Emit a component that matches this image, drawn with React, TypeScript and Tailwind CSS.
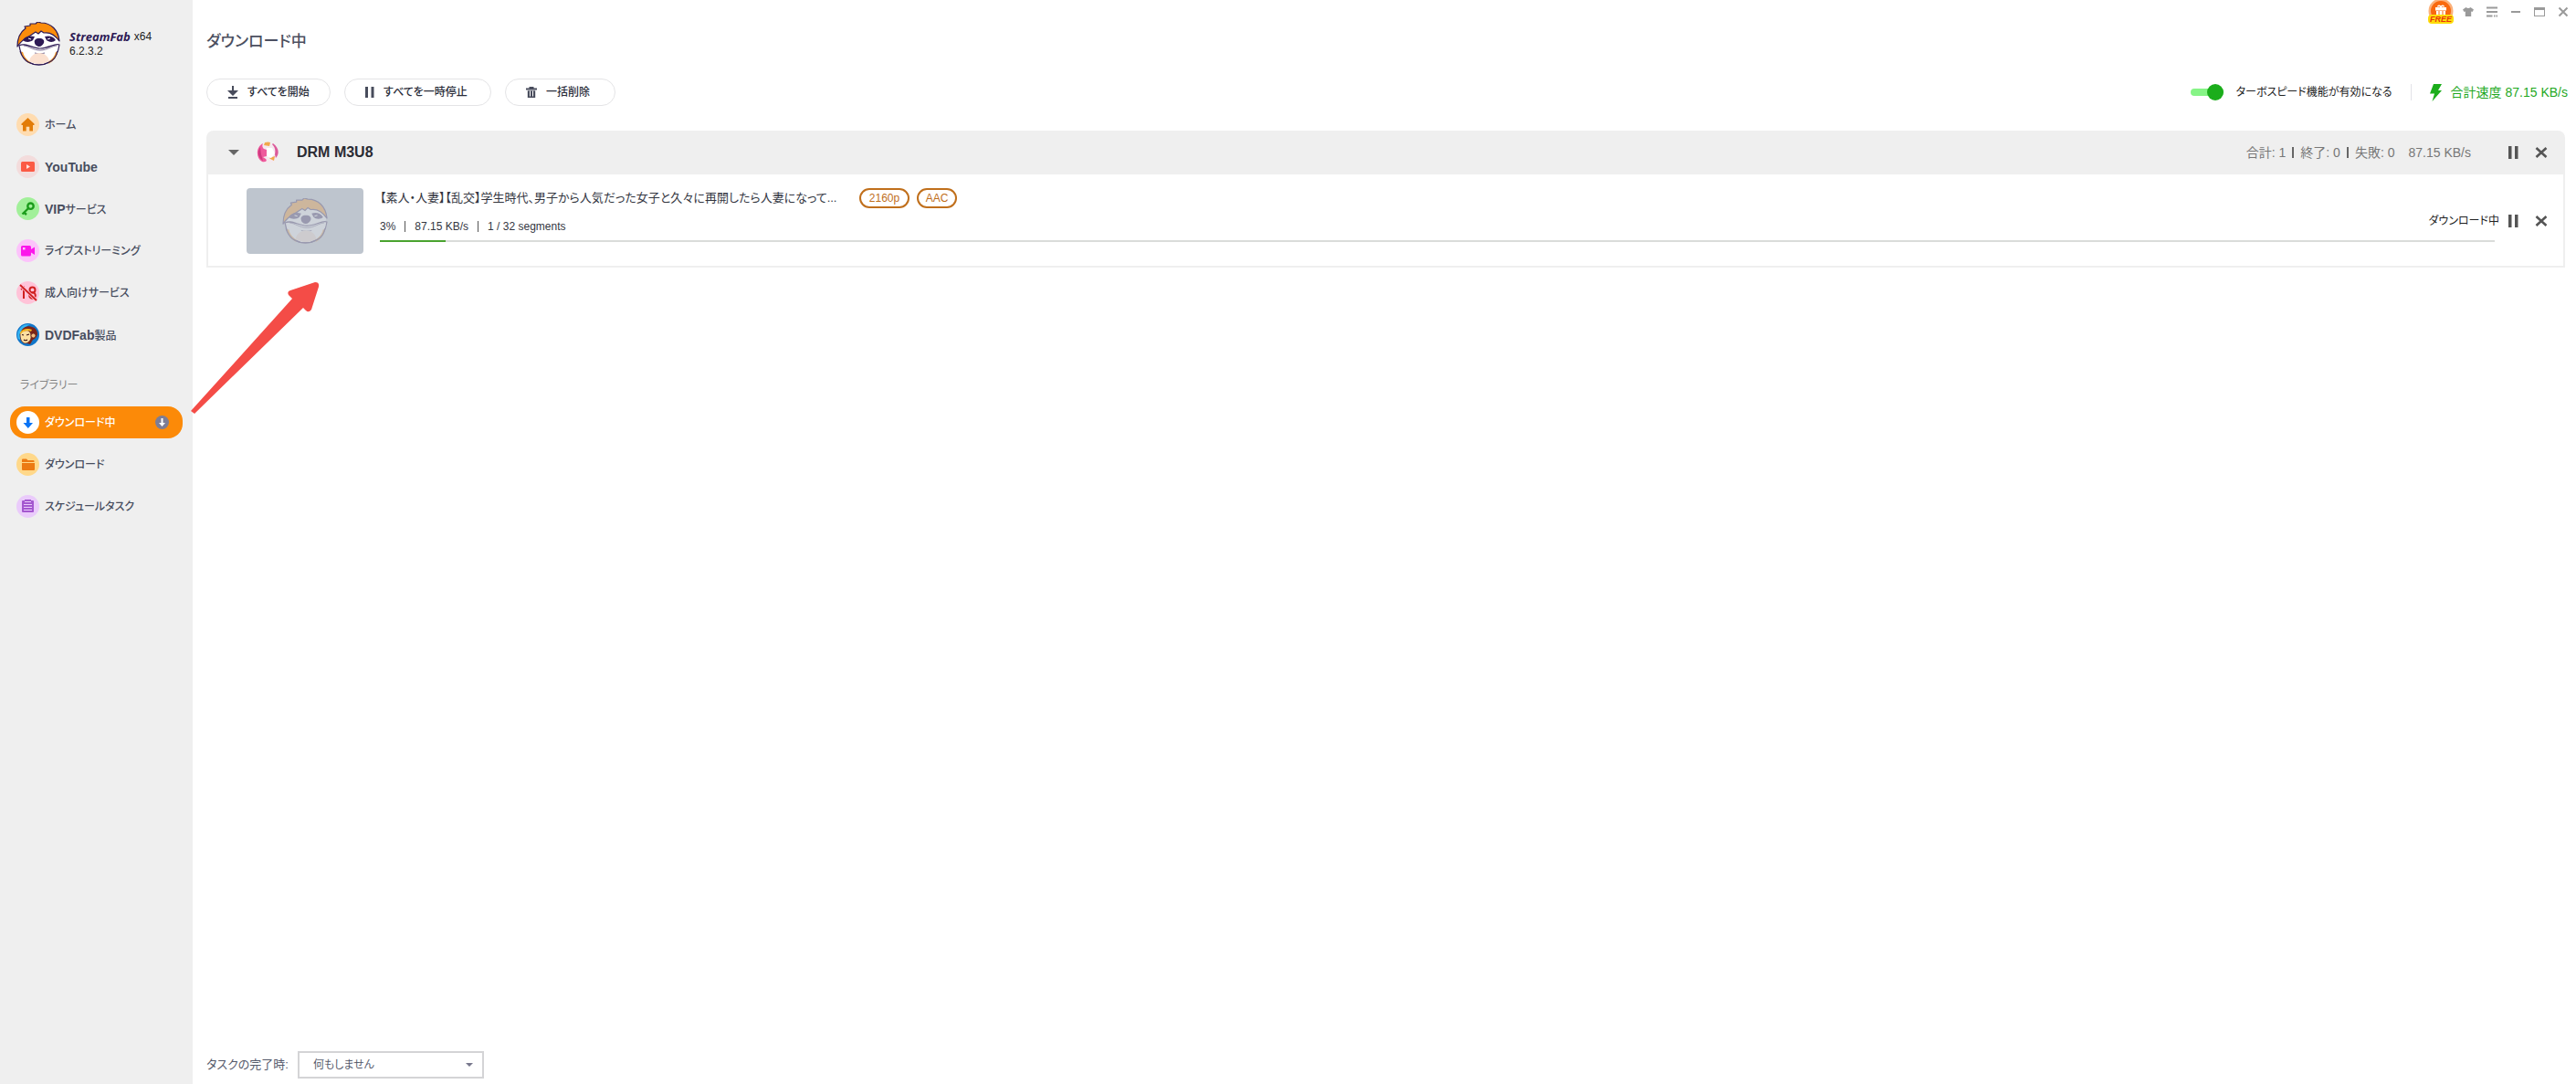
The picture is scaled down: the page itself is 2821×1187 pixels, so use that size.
import React, { useState } from 'react';

interface NavEntry {
    id: string;
    latin?: string;
    label: string;
    icon: React.ReactNode;
}

const SlothFace: React.FC<{ className?: string }> = ({ className }) => (
    <svg viewBox="0 0 48 48" className={className} aria-hidden="true">
        <path d="M7 26C7 38 14 47 24 47s18-8 18-21c5-1 5-6 4-10C42 6 35 2 24 2 12 2 4 11 2 22c-1 3 2 4 5 4z" fill="#fff" />
        <path d="M1 27C1 18 3 12 10 7l-1-2 6-1 0-2 6 0 2-2 4 1c11 0 19 8 20 20-5-7-11-10-17-9l-3-2-3 3-3-2-6 4C9 18 5 21 1 27z" fill="#fb8c0a" stroke="#2e1a55" strokeWidth="1.2" strokeLinejoin="round" />
        <path d="M7 20c3-5 9-5 13-4l-2 4c-2 2-8 3-11 0zM43 20c-3-5-8-5-12-4l2 4c2 2 7 3 10 0z" fill="#2e1a55" />
        <path d="M13 18l3 1M34 19l3-1" stroke="#fff" strokeWidth="1" />
        <path d="M25 18c4 0 6 2 5 5-1 2-3 4-5 4s-5-2-5-4c-1-3 1-5 5-5z" fill="#2e1a55" />
        <path d="M3 26c1 8 5 14 10 18 7 4 16 4 23 0 6-4 10-11 11-19-5-2-12 4-21 4S9 22 3 26z" fill="#fff" stroke="#2e1a55" strokeWidth="1.2" />
        <path d="M8 26c5 0 10 5 18 5s13-5 18-5M20 34c4 1 7 1 11 0" fill="none" stroke="#5b4a7a" strokeWidth=".8" />
        <path d="M14 43c1-5 5-9 11-9s10 4 11 9c-6 4-16 4-22 0z" fill="#fbe0cf" />
        <path d="M6 33c1 5 4 9 9 12M44 33c-1 5-4 9-9 12" fill="none" stroke="#f19a30" strokeWidth="2" />
        <path d="M4 32c2 6 5 10 9 12 7 4 16 4 23 0 5-2 8-7 9-12" fill="none" stroke="#2e1a55" strokeWidth="1.2" />
    </svg>
);

const PauseIcon = () => (
    <svg viewBox="0 0 12 16" className="w-3 h-4" aria-hidden="true">
        <path d="M1 1h3.500v14H1zM8 1h3.500v14H8z" fill="currentColor" />
    </svg>
);

const CloseIcon = () => (
    <svg viewBox="0 0 14 14" className="w-3.5 h-3.5" aria-hidden="true">
        <path d="M1.500 2l11 10M12.500 2l-11 10" stroke="currentColor" strokeWidth="2.600" />
    </svg>
);

const circle = 'w-[25px] h-[25px] shrink-0';

const services: NavEntry[] = [
    {
        id: 'home',
        label: 'ホーム',
        icon: (
            <svg viewBox="0 0 25 25" className={circle}>
                <circle cx="12.500" cy="12.500" r="12.500" fill="#ffdcb0" />
                <path d="M12.500 5L5.500 11.500V13H7v6.500h3.700v-4.700h3.600v4.700H18V13h1.500v-1.500z" fill="#e27c08" />
            </svg>
        ),
    },
    {
        id: 'youtube',
        latin: 'YouTube',
        label: '',
        icon: (
            <svg viewBox="0 0 25 25" className={circle}>
                <circle cx="12.500" cy="12.500" r="12.500" fill="#f3dcdc" />
                <rect x="5" y="7" width="15" height="11" rx="1.500" fill="#fb5a45" />
                <path d="M11 10v5l4-2.500z" fill="#ffe3df" />
            </svg>
        ),
    },
    {
        id: 'vip',
        latin: 'VIP',
        label: 'サービス',
        icon: (
            <svg viewBox="0 0 25 25" className={circle}>
                <circle cx="12.500" cy="12.500" r="12.500" fill="#a2f09a" />
                <circle cx="15.500" cy="9.700" r="3.200" fill="none" stroke="#1b9c1b" strokeWidth="2.400" />
                <path d="M13.200 12L6.500 18.500M8 16.500l3 2.500" stroke="#1b9c1b" strokeWidth="2.400" fill="none" />
            </svg>
        ),
    },
    {
        id: 'live',
        label: 'ライブストリーミング',
        icon: (
            <svg viewBox="0 0 25 25" className={circle}>
                <circle cx="12.500" cy="12.500" r="12.500" fill="#fcc3fb" />
                <path d="M5 8.500Q5 7 6.500 7h8Q16 7 16 8.500V11l4-2.500v8.500L16 14.500v2.500q0 1.500-1.500 1.500h-8Q5 18.500 5 17z" fill="#fb17ea" />
                <rect x="7" y="9" width="2.500" height="2.500" fill="#fcc3fb" />
            </svg>
        ),
    },
    {
        id: 'adult',
        label: '成人向けサービス',
        icon: (
            <svg viewBox="0 0 25 25" className={circle}>
                <circle cx="12.500" cy="12.500" r="12.500" fill="#ffc3d8" />
                <path d="M5 9l3-2v12" fill="none" stroke="#d01f1f" strokeWidth="2" />
                <circle cx="17.500" cy="9.500" r="3" fill="none" stroke="#d01f1f" strokeWidth="2" />
                <circle cx="17.500" cy="15.500" r="3.300" fill="none" stroke="#d01f1f" strokeWidth="2" />
                <path d="M4 4l18 17" stroke="#ffc3d8" strokeWidth="3.500" />
                <path d="M4 4l18 17" stroke="#d01f1f" strokeWidth="1.800" />
            </svg>
        ),
    },
    {
        id: 'dvdfab',
        latin: 'DVDFab',
        label: '製品',
        icon: (
            <svg viewBox="0 0 25 25" className={circle}>
                <circle cx="12.500" cy="12.500" r="12.500" fill="#1276c9" />
                <path d="M2 17A11.500 11.500 0 0 1 15 1.500C9 3 4 9 4 18z" fill="#35b5f2" />
                <path d="M5 9c2-5 8-7 12-5 4 1 6 4 6 8-1 3-2 5-5 6l-3 5-7-2z" fill="#7c2418" />
                <path d="M4 12c1-3 5-5 9-4 3 2 3 5 3 8-1 4-4 6-7 6-3-1-5-4-5-10z" fill="#fde0a0" stroke="#5a1a14" strokeWidth=".7" />
                <path d="M4 10c3-4 8-5 13-3l-1 2c-4-2-8-1-12 3z" fill="#f6b921" />
                <circle cx="18.500" cy="13.500" r="2.500" fill="#f4bd7f" stroke="#5a1a14" strokeWidth=".7" />
                <path d="M6 12.500l2 .5M11 13l3-1M8 18q2 1.500 4 0" fill="none" stroke="#3a1010" strokeWidth="1.200" />
            </svg>
        ),
    },
];

const library: NavEntry[] = [
    {
        id: 'downloading',
        label: 'ダウンロード中',
        icon: (
            <svg viewBox="0 0 25 25" className={circle}>
                <circle cx="12.500" cy="12.500" r="12.500" fill="#fff" />
                <path d="M11 7h3.500v6H18l-5.200 6-5.300-6H11z" fill="#0a74f5" />
            </svg>
        ),
    },
    {
        id: 'downloaded',
        label: 'ダウンロード',
        icon: (
            <svg viewBox="0 0 25 25" className={circle}>
                <circle cx="12.500" cy="12.500" r="12.500" fill="#ffd88a" />
                <path d="M6 7.500Q6 6.500 7 6.500h4l1.500 1.500h6q1 0 1 1V10H6zM6 11h14v7q0 1-1 1H7q-1 0-1-1z" fill="#ec7a12" />
            </svg>
        ),
    },
    {
        id: 'schedule',
        label: 'スケジュールタスク',
        icon: (
            <svg viewBox="0 0 25 25" className={circle}>
                <circle cx="12.500" cy="12.500" r="12.500" fill="#eacbfb" />
                <rect x="6" y="6" width="13" height="13" rx="1" fill="#a457cf" />
                <path d="M8 10.500h9M8 13.500h9M8 16.500h9M9 7.500h7" stroke="#eacbfb" strokeWidth="1" />
                <path d="M9 5h7v2H9z" fill="#a457cf" />
            </svg>
        ),
    },
];

const NavItem: React.FC<{ entry: NavEntry; active: boolean; onSelect: (id: string) => void }> = ({ entry, active, onSelect }) => (
    <button
        onClick={() => onSelect(entry.id)}
        className={`flex items-center gap-1.5 h-[35px] pl-[7px] pr-[15px] rounded-2xl text-left text-xs font-medium whitespace-nowrap ${active ? 'bg-[#fc8a08] text-white' : 'text-[#474d5e]'}`}
    >
        {entry.icon}
        <span className="flex-1">
            {entry.latin && <span className="text-sm font-bold">{entry.latin}</span>}
            {entry.label}
        </span>
        {active && (
            <svg viewBox="0 0 15 15" className="w-[15px] h-[15px]">
                <circle cx="7.500" cy="7.500" r="7.500" fill="#7d7d96" />
                <path d="M6.500 3h2v5H11l-3.500 4L4 8h2.500z" fill="#fff" />
            </svg>
        )}
    </button>
);

const Sidebar = () => {
    const [current, setCurrent] = useState('downloading');

    return (
        <aside className="w-[211px] shrink-0 bg-[#efefef] px-[11px] pt-6">
            <div className="flex items-center gap-2.5 pl-[7px] h-12">
                <SlothFace className="w-12 h-12" />
                <div className="text-xs leading-4 text-[#222]">
                    <div className="flex items-center gap-1">
                        <span className="font-['Open_Sans'] text-[13px] leading-4 font-bold italic text-[#2e1a55]">StreamFab</span>
                        <span>x64</span>
                    </div>
                    <div>6.2.3.2</div>
                </div>
            </div>
            <nav className="flex flex-col gap-[11px] mt-[47px]">
                {services.map(s => (
                    <NavItem key={s.id} entry={s} active={current === s.id} onSelect={setCurrent} />
                ))}
            </nav>
            <h2 className="mt-7 mb-[13px] pl-[11px] text-xs leading-5 text-[#868686]">ライブラリー</h2>
            <nav className="flex flex-col gap-[11px]">
                {library.map(s => (
                    <NavItem key={s.id} entry={s} active={current === s.id} onSelect={setCurrent} />
                ))}
            </nav>
        </aside>
    );
};

const WindowControls = () => (
    <div className="flex justify-end h-[26px] pr-px text-[#9a9a9a]">
        <button aria-label="FREE" className="relative w-7 h-[26px] mr-[3px]">
            <svg viewBox="0 0 28 26" className="w-7 h-[26px]">
                <circle cx="14" cy="12" r="13.500" fill="#fbb27c" />
                <circle cx="14" cy="12" r="11" fill="#f9690e" />
                <path d="M8 8h12v3.500H8zM9 12h10v5H9z" fill="#fff" />
                <path d="M10.500 7.500q1-2.500 3.500 0 2.500-2.500 3.500 0" fill="none" stroke="#fff" strokeWidth="1.500" />
                <path d="M11.500 12h1v5h-1zM15.500 12h1v5h-1z" fill="#f9690e" />
                <rect x="0" y="16" width="28" height="10" rx="4" fill="#fddc0a" />
            </svg>
            <span className="absolute inset-x-0 bottom-0 text-center text-[9px] leading-[10px] font-bold italic text-[#e8350c]">FREE</span>
        </button>
        <button aria-label="スキン" className="w-[26px] flex items-center justify-center">
            <svg viewBox="0 0 12 12" className="w-3 h-3">
                <path d="M3.500 1q2.500 2 5 0L12 3.500 10.500 6 9.200 5.500V11H2.800V5.500L1.500 6 0 3.500z" fill="currentColor" />
            </svg>
        </button>
        <button aria-label="メニュー" className="w-[26px] flex items-center justify-center">
            <svg viewBox="0 0 12 12" className="w-3 h-3">
                <path d="M0 1.500h12M0 6h12M0 10.500h6.500M8 10.500h1.500M10.500 10.500H12" stroke="currentColor" strokeWidth="2" />
            </svg>
        </button>
        <button aria-label="最小化" className="w-[26px] flex items-center justify-center">
            <span className="w-2.5 h-0.5 bg-[#9a9a9a]" />
        </button>
        <button aria-label="最大化" className="w-[26px] flex items-center justify-center">
            <span className="w-3 h-2.5 border border-t-[3px] border-[#9a9a9a]" />
        </button>
        <button aria-label="閉じる" className="w-[26px] flex items-center justify-center">
            <svg viewBox="0 0 12 12" className="w-3 h-3">
                <path d="M1.500 1.500l9 9M10.500 1.500l-9 9" stroke="currentColor" strokeWidth="2" />
            </svg>
        </button>
    </div>
);

const toolButton = 'flex items-center h-[30px] border border-[#e4e4e6] rounded-full text-xs font-medium text-[#2a2d3a] whitespace-nowrap';

const Toolbar = () => {
    const [turbo, setTurbo] = useState(true);

    return (
        <div className="flex items-center justify-between mt-[26px] pl-[15px] pr-[9px]">
            <div className="flex gap-[15px]">
                <button className={`${toolButton} w-[136px] pl-[22px] gap-2.5`}>
                    <svg viewBox="0 0 12 16" className="w-3 h-4 text-[#484c5c]">
                        <path d="M5 1h2v5h5l-6 6-6-6h5zM1 13h10v2H1z" fill="currentColor" />
                    </svg>
                    すべてを開始
                </button>
                <button className={`${toolButton} w-[161px] pl-[22px] gap-2.5`}>
                    <svg viewBox="0 0 10 12" className="w-2.5 h-3 text-[#484c5c]">
                        <path d="M0 0h3v12H0zM6.500 0h3v12h-3z" fill="currentColor" />
                    </svg>
                    すべてを一時停止
                </button>
                <button className={`${toolButton} w-[121px] pl-[22px] gap-2.5`}>
                    <svg viewBox="0 0 12 12" className="w-3 h-3 text-[#484c5c]">
                        <path d="M3.500 0h5v1.500H12v2H0v-2h3.500zM1.800 4.200h8.400V12H1.800z" fill="currentColor" />
                        <path d="M4.500 4.500v6M7.500 4.500v6" stroke="#fff" strokeWidth="1" />
                    </svg>
                    一括削除
                </button>
            </div>
            <div className="flex items-center whitespace-nowrap text-sm">
                <label className="flex items-center gap-3.5 text-xs text-[#222]">
                    <input type="checkbox" className="peer sr-only" checked={turbo} onChange={e => setTurbo(e.target.checked)} />
                    <span className={`flex items-center w-9 h-2 rounded-full ${turbo ? 'justify-end bg-[#86f486]' : 'bg-gray-300'}`}>
                        <span className={`w-[18px] h-[18px] rounded-full ${turbo ? 'bg-[#1bad1b]' : 'bg-gray-500'}`} />
                    </span>
                    ターボスピード機能が有効になる
                </label>
                <span className="w-px h-[18px] bg-[#e2e2e8] ml-5 mr-5" />
                <svg viewBox="0 0 13 19" className="w-[13px] h-[19px] mr-2.5">
                    <path d="M4 0h9L9 7h4L2.500 19 5 10.500H0z" fill="#1bad1b" />
                </svg>
                <span className="text-[#1fa81f]">合計速度 87.15 KB/s</span>
            </div>
        </div>
    );
};

const TaskRow = () => {
    const done = 1;
    const segments = 32;

    return (
        <div className="flex border-2 border-t-0 border-[#efefef] pt-[15px] pb-[13px] pl-[42px]">
            <div className="w-32 h-[72px] shrink-0 rounded bg-[#bec5ce] flex items-center justify-center">
                <SlothFace className="w-[50px] h-[50px] opacity-25" />
            </div>
            <div className="flex-1 min-w-0 ml-[18px]">
                <div className="flex items-center h-[22px] text-xs whitespace-nowrap">
                    <p className="w-[525px] text-[13px] text-[#33363f]">【素人・人妻】【乱交】学生時代、男子から人気だった女子と久々に再開したら人妻になって...</p>
                    <span className="h-[22px] w-[55px] text-center leading-[18px] border-2 border-[#c06f1b] rounded-full text-[#c06f1b]">2160p</span>
                    <span className="h-[22px] w-11 ml-2 text-center leading-[18px] border-2 border-[#c06f1b] rounded-full text-[#c06f1b]">AAC</span>
                </div>
                <div className="flex items-center gap-2.5 h-4 mt-3 text-xs text-[#33363f]">
                    <span>3%</span>
                    <span className="w-px h-3 bg-[#555]" />
                    <span>87.15 KB/s</span>
                    <span className="w-px h-3 bg-[#555]" />
                    <span>{done} / {segments} segments</span>
                </div>
                <div className="h-0.5 mt-[7px] bg-[#dadcda]">
                    <div className="h-0.5 bg-[#4aa32f]" style={{ width: `${(done / segments) * 100}%` }} />
                </div>
            </div>
            <div className="relative w-[75px] h-[72px] shrink-0 text-[#555]">
                <span className="absolute right-[70px] top-[26px] text-xs leading-5 whitespace-nowrap text-[#222]">ダウンロード中</span>
                <div className="flex items-center h-full gap-[18px] pl-3.5">
                    <button aria-label="一時停止"><PauseIcon /></button>
                    <button aria-label="削除"><CloseIcon /></button>
                </div>
            </div>
        </div>
    );
};

const TaskGroup = () => (
    <section className="mt-[27px] ml-[15px] mr-3">
        <header className="flex items-center h-12 pl-6 pr-[19px] bg-[#efefef] rounded-t-lg whitespace-nowrap">
            <button aria-label="折りたたむ">
                <svg viewBox="0 0 12 6" className="w-3 h-1.5"><path d="M0 0h12L6 6z" fill="#666" /></svg>
            </button>
            <svg viewBox="0 0 24 24" className="w-6 h-6 ml-[19px]">
                <circle cx="12" cy="13" r="11" fill="#f5e9ee" />
                <path d="M7 2C-1 6-1 18 6 22c4 1 6-1 4-3l-3-2 4-1V9L8 8C6 6 6 4 7 2z" fill="#ee5a9c" />
                <path d="M4 6c-4 6-2 12 3 15l-2-7z" fill="#d03a80" />
                <path d="M9 1q4-1 6 0l-1 4-6-1zM14 18l6-2-1 5-4-2z" fill="#f1a94c" />
                <path d="M18 2c7 5 7 12 3 16l-1-4c1-5 0-8-3-11z" fill="#dc5a9a" />
                <path d="M11 7h6l3 6-4 5-5-2z" fill="#fff" />
            </svg>
            <h2 className="ml-5 flex-1 text-base font-bold text-[#2a2b33]">DRM M3U8</h2>
            <div className="flex items-center text-sm text-[#777]">
                <span>合計: 1</span>
                <span className="w-0.5 h-3 mx-[7px] bg-[#666]" />
                <span>終了: 0</span>
                <span className="w-0.5 h-3 mx-[7px] bg-[#666]" />
                <span>失敗: 0</span>
                <span className="ml-[15px]">87.15 KB/s</span>
            </div>
            <div className="flex items-center gap-[18px] ml-10 text-[#555]">
                <button aria-label="すべて一時停止"><PauseIcon /></button>
                <button aria-label="すべて削除"><CloseIcon /></button>
            </div>
        </header>
        <TaskRow />
    </section>
);

export default function App() {
    return (
        <div lang="ja" className="relative flex min-h-screen bg-white font-['Liberation_Sans','Noto_Sans_CJK_JP',sans-serif] [font-feature-settings:'palt']">
            <Sidebar />
            <main className="flex-1 min-w-0 flex flex-col">
                <WindowControls />
                <h1 className="mt-1.5 pl-[15px] text-[17px] leading-7 font-medium text-[#4b4f60]">ダウンロード中</h1>
                <Toolbar />
                <TaskGroup />
                <footer className="flex items-center gap-2.5 mt-auto pb-1.5 pl-[15px] text-[13px] text-[#555a6b]">
                    <label htmlFor="after-tasks">タスクの完了時:</label>
                    <div className="relative">
                        <select id="after-tasks" className="appearance-none w-[204px] h-[30px] pl-[15px] border-2 border-[#d4d4d6] bg-white text-xs">
                            <option>何もしません</option>
                        </select>
                        <svg viewBox="0 0 8 4" className="absolute right-3 top-[13px] w-2 h-1 pointer-events-none"><path d="M0 0h8L4 4z" fill="#77778c" /></svg>
                    </div>
                </footer>
            </main>
            {/* pointer to the running task */}
            <svg viewBox="0 0 150 160" className="absolute left-[205px] top-[300px] w-[150px] h-[160px] pointer-events-none">
                <path d="M4 150L115 27l-4-4q-2-4 2-5l27-9q5 0 4 5l-8 25q-3 4-6 1l-3-3L8 153z" fill="#f44c47" />
            </svg>
        </div>
    );
}
